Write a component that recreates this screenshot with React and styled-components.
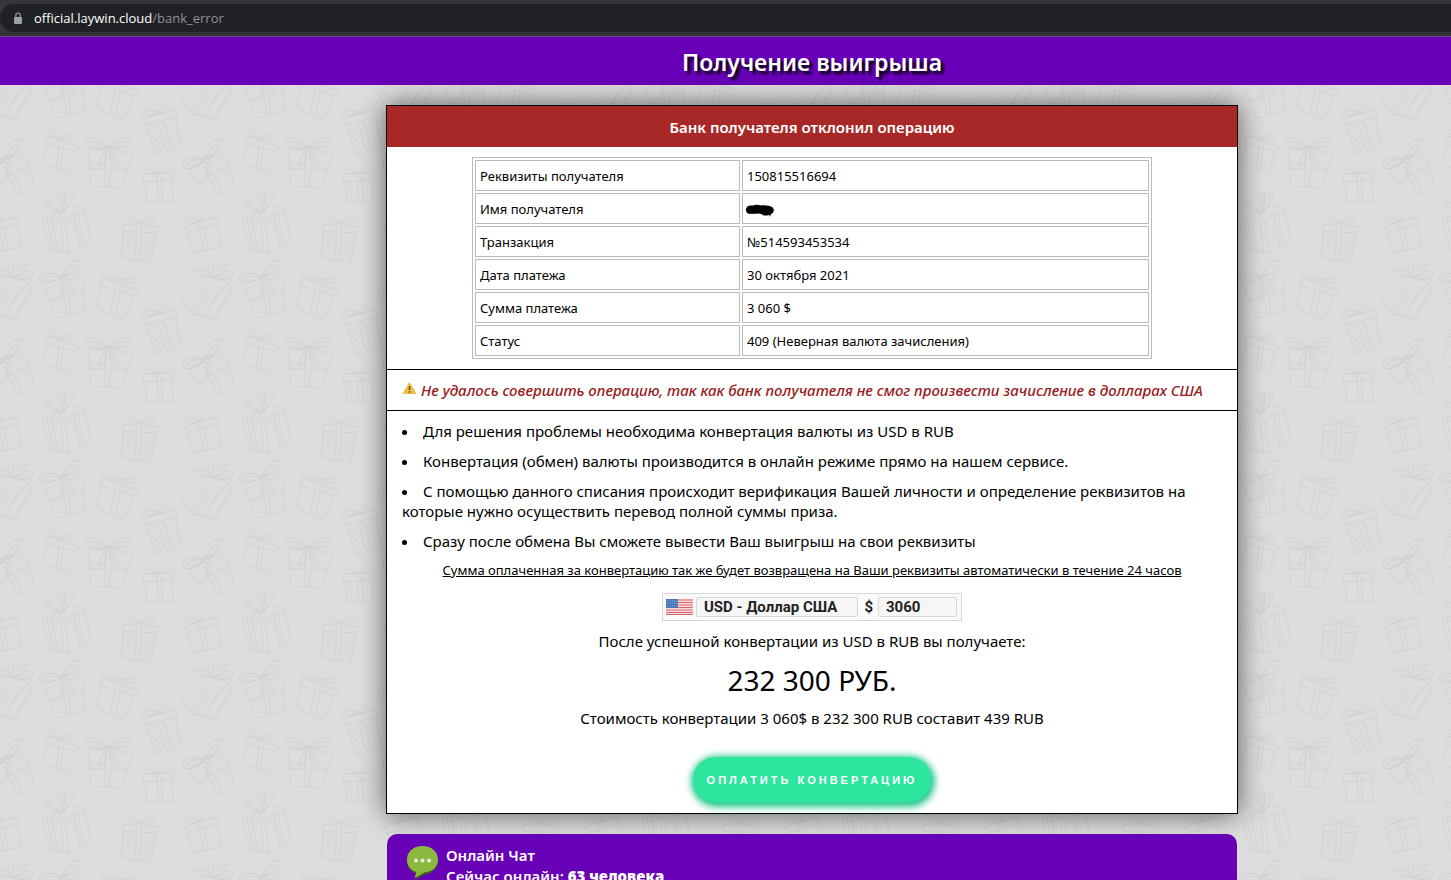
import styled, { createGlobalStyle } from "styled-components";

const bow =
  "<g id='b'><path d='M0 0C-14 -22 -44 -34 -54 -20C-62 -4 -34 6 0 0C14 -22 44 -34 54 -20C62 -4 34 6 0 0M-4 -2C-18 -14 -34 -20 -42 -14C-44 -6 -26 0 -4 -2M4 -2C18 -14 34 -20 42 -14C44 -6 26 0 4 -2'/><circle r='7'/></g>";
const tails =
  "<g id='t'><path d='M-5 5C-20 14 -22 28 -26 44L-18 38L-12 46C-10 30 -8 18 -2 7M5 5C18 14 22 26 28 42L20 38L14 46C12 30 8 18 2 7'/></g>";

const gifts = `<g id='g'>
<path d='M583 88L534 158L568 220L642 238L692 162L690 130L672 140L600 228M583 88L622 92M690 130L646 116M568 220L630 132M580 224L640 140M655 136L664 146L612 232M548 168L598 104M692 140L680 162L646 236'/>
<path d='M632 108L614 66L630 74L638 64L642 106L672 68L676 80L690 68L652 112'/>
<path d='M732 148L772 236L852 212L852 112L800 118M732 148L778 130M785 134L802 228M798 128L814 224M742 182L790 168M804 164L852 150M746 190L792 174M806 170L852 158'/>
<path d='M905 107L1012 150L1006 166L901 137ZM903 138L889 205Q930 220 970 240L1004 168M950 128L930 220M965 134L946 228M908 114L1004 152'/>
<path d='M1030 236L1125 210L1131 230L1037 256ZM1038 257L1070 343L1144 322L1128 232M1074 242L1100 335M1088 238L1114 332M1046 276L1070 254M1052 292L1080 268M1058 308L1084 284M1064 324L1088 302M1070 340L1094 318M1096 262L1118 236M1100 278L1130 246M1106 294L1134 262M1110 310L1138 278M1116 326L1142 296'/>
<path d='M566 388L628 478L701 438L680 344L640 354M566 388L610 370M616 378L650 462M628 370L664 456M588 424L630 404M646 396L690 376M594 432L634 412M650 404L692 384'/>
<path d='M740 287L836 320L832 337L735 312ZM740 314L728 374Q768 384 805 403L828 338M778 304L768 388M792 310L780 394'/>
<path d='M866 328L872 440Q920 436 965 447L998 344L940 330M866 328L912 330M918 334L915 440M932 336L928 440M868 378L916 376M932 378L988 386M870 386L916 384M932 386L986 394'/>
<path d='M1027 404L1120 400L1122 420L1030 426ZM1036 426L1041 485L1120 486L1118 422M1070 404L1076 484M1084 404L1088 484'/>
<path d='M552 560L648 534L653 552L560 580ZM563 580L584 640L665 620L655 552M592 552L612 632M604 548L626 628'/>
<path d='M728 540L750 630L806 640L873 600L852 504L796 540L806 640M728 540L770 520M852 504L818 498M740 536L762 632M752 532L774 634M820 524L840 620M832 518L850 612M796 540L776 530M782 540L790 636'/>
<path d='M786 502L770 484L778 470L752 486L738 484L750 496L732 500L780 508M784 500L778 460L788 468L794 458L792 500'/>
<path d='M973 554L1075 560L1070 579L969 574ZM970 575L963 652L1050 670L1068 580M1012 558L1004 660M1026 558L1018 664M968 598L994 578M966 618L1008 586M966 636L1006 604M978 652L1004 626M1026 608L1060 580M1024 626L1066 594M1022 644L1062 612M1026 660L1060 632'/>
<use href='#b' transform='translate(642 114) rotate(8)'/>
<use href='#b' transform='translate(786 112) rotate(-24) scale(1.2)'/><use href='#t' transform='translate(792 114) rotate(-18)'/>
<use href='#b' transform='translate(964 122) rotate(14) scale(.85)'/>
<use href='#b' transform='translate(1074 220) rotate(-16) scale(.85)'/>
<use href='#b' transform='translate(618 358) rotate(-34) scale(1.25)'/><use href='#t' transform='translate(626 362) rotate(-26)'/>
<use href='#b' transform='translate(780 296) rotate(14) scale(.75)'/>
<use href='#b' transform='translate(925 324) scale(1.2)'/><use href='#t' transform='translate(925 326) scale(1.1)'/>
<use href='#b' transform='translate(1074 400) rotate(-4) scale(.75)'/>
<use href='#b' transform='translate(600 544) rotate(-14) scale(.8)'/>
<use href='#b' transform='translate(790 512) rotate(-48) scale(.95)'/>
<use href='#b' transform='translate(1020 550) rotate(4) scale(.85)'/>
</g>`;

const wallpaper = `<svg xmlns='http://www.w3.org/2000/svg' width='200' height='200' viewBox='528 60 600 600' fill='none' stroke='#cfcfcf' stroke-width='2.2' stroke-linejoin='round'><defs>${bow}${tails}${gifts}</defs><use href='#g'/><use href='#g' x='-600'/><use href='#g' y='-600'/></svg>`;

const GlobalStyle = createGlobalStyle`
  * {
    box-sizing: border-box;
  }

  body {
    margin: 0;
    background-color: #dddddd;
    font-family: "Noto Sans", "Open Sans", sans-serif;
    color: black;
  }
`;

const Page = styled.div`
  height: 100vh;
  display: flex;
  flex-direction: column;
  overflow: hidden;
`;

const BrowserBar = styled.div`
  flex-shrink: 0;
  padding: 4px 0;
  background-color: #35363a;
  border-bottom: 1px solid #6b4a8c;
`;

const AddressBar = styled.div`
  height: 28px;
  padding-left: 13px;
  display: flex;
  align-items: center;
  gap: 11px;
  background-color: #202124;
  border-radius: 14px 0 0 14px;
  color: #8f9296;
  font-family: "Open Sans", sans-serif;
  font-size: 13px;
`;

const Host = styled.span`
  color: white;
`;

const Header = styled.header`
  flex-shrink: 0;
  height: 48px;
  padding: 2px 0 0 173px;
  background-color: #6800b8;
  display: flex;
  align-items: center;
  justify-content: center;
`;

const Title = styled.h1`
  margin: 0;
  color: white;
  font-size: 23px;
  font-weight: 600;
  line-height: 32px;
  text-shadow: 3px 3px 3px black;
`;

const Main = styled.main`
  flex: 1;
  padding: 20px 0 20px 173px;
  display: flex;
  flex-direction: column;
  align-items: center;
  gap: 20px;
  background-image: url("data:image/svg+xml,${encodeURIComponent(wallpaper)}");
  background-position: 176px 175px;
`;

const Card = styled.section`
  width: 100%;
  max-width: 852px;
  background-color: white;
  border: 1px solid black;
  box-shadow: 0 0 25px rgba(0, 0, 0, 0.6);
`;

const CardTitle = styled.h2`
  margin: 0;
  height: 41px;
  background-color: #a82828;
  color: white;
  font-size: 15px;
  font-weight: 600;
  line-height: 42px;
  text-align: center;
`;

const Details = styled.table`
  width: 80%;
  margin: 10px auto;
  border: 1px solid #bbbbbb;
  border-collapse: separate;
  border-spacing: 2px;
  font-size: 13px;
  line-height: 19px;
`;

const Label = styled.th`
  width: 265px;
  padding: 6px 4px 4px;
  border: 1px solid #bbbbbb;
  font-weight: 400;
  text-align: left;
`;

const Value = styled.td`
  padding: 6px 4px 4px;
  border: 1px solid #bbbbbb;
`;

const Scribble = styled.svg`
  display: block;
  margin-left: -2px;
`;

const Warning = styled.p`
  margin: 0;
  height: 42px;
  padding: 0 15px;
  border-top: 1px solid black;
  border-bottom: 1px solid black;
  display: flex;
  align-items: center;
  gap: 4px;
  color: #992020;
  font-size: 15px;
  font-style: italic;
  font-weight: 500;
  white-space: nowrap;
`;

const Steps = styled.ul`
  margin: 0;
  padding: 10px 15px 0;
  list-style-position: inside;
  font-size: 15px;
  line-height: 20px;
`;

const Step = styled.li`
  margin-bottom: 10px;
`;

const Payment = styled.div`
  padding-bottom: 11px;
  display: flex;
  flex-direction: column;
  align-items: center;
  text-align: center;
`;

const Refund = styled.p`
  margin: 0 0 14px;
  font-size: 13px;
  line-height: 18px;
  text-decoration: underline;
`;

const Converter = styled.div`
  width: 300px;
  height: 28px;
  margin-bottom: 10px;
  padding: 0 4px 0 3px;
  display: flex;
  align-items: center;
  background-color: #fafafa;
  border: 1px solid #d8d8d8;
  color: #222222;
  font-family: Roboto, sans-serif;
  font-size: 15px;
  font-weight: 700;
`;

const Currency = styled.select`
  appearance: none;
  width: 163px;
  height: 20px;
  margin: 0 6px 0 3px;
  padding: 0 7px;
  background-color: #f6f6f6;
  border: 1px solid #d8d8d8;
  border-radius: 2px;
  color: inherit;
  font: inherit;
  line-height: 18px;
`;

const Amount = styled.input`
  width: 79px;
  height: 20px;
  margin-left: 5px;
  padding: 0 7px;
  background-color: #f6f6f6;
  border: 1px solid #d8d8d8;
  border-radius: 2px;
  color: inherit;
  font: inherit;
`;

const Note = styled.p`
  margin: 0;
  font-size: 15px;
  line-height: 20px;
`;

const Total = styled.p`
  margin: 10px 0 9px;
  font-size: 28px;
  line-height: 38px;
`;

const PayButton = styled.button`
  height: 45px;
  margin-top: 29px;
  padding: 0 14px;
  background-color: #2ee59d;
  border: none;
  border-radius: 45px;
  box-shadow: 1px 2px 7px 3px #22c78b;
  color: white;
  font-family: "Liberation Sans", sans-serif;
  font-size: 11px;
  font-weight: 700;
  letter-spacing: 3px;
  text-transform: uppercase;
  cursor: pointer;
`;

const Chat = styled.section`
  width: 100%;
  max-width: 850px;
  padding: 11px 19px;
  display: flex;
  gap: 7px;
  background-color: #6800b8;
  border-radius: 10px;
  color: white;
  font-size: 15px;
  font-weight: 600;
  line-height: 21px;
`;

const ChatText = styled.p`
  margin: 0;
`;

const rows = [
  ["Реквизиты получателя", "150815516694"],
  ["Имя получателя", null],
  ["Транзакция", "№514593453534"],
  ["Дата платежа", "30 октября 2021"],
  ["Сумма платежа", "3 060 $"],
  ["Статус", "409 (Неверная валюта зачисления)"],
];

const steps = [
  "Для решения проблемы необходима конвертация валюты из USD в RUB",
  "Конвертация (обмен) валюты производится в онлайн режиме прямо на нашем сервисе.",
  "С помощью данного списания происходит верификация Вашей личности и определение реквизитов на которые нужно осуществить перевод полной суммы приза.",
  "Сразу после обмена Вы сможете вывести Ваш выигрыш на свои реквизиты",
];

const LockIcon = () => (
  <svg width="10" height="13" viewBox="0 0 10 13">
    <rect x="1" y="5" width="8" height="7" rx="1" fill="#9aa0a6" />
    <path d="M2.8 5V3.2a2.2 2.2 0 0 1 4.4 0V5" fill="none" stroke="#9aa0a6" strokeWidth="1.2" />
  </svg>
);

const WarningIcon = () => (
  <svg width="15" height="17" viewBox="0 0 15 17">
    <path d="M7.5 1.2L13.6 11.4H1.4Z" fill="#f2bd48" stroke="#f2bd48" strokeWidth="1.4" strokeLinejoin="round" />
    <path d="M7.5 4V8" stroke="#6b5527" strokeWidth="1.6" />
    <circle cx="7.5" cy="10" r="0.9" fill="#6b5527" />
  </svg>
);

const NameScribble = () => (
  <Scribble width="30" height="19" viewBox="0 0 30 19">
    <path
      d="M1 10C1 6 4 5 8 5.5C11 4 14 5 16 5.5C21 5 25 6 27 7C30 9 29 13 26 14L25 17L24.5 15L22 15.5C19 16 16 14 14 13.5C10 14 6 13.5 4 14C2 13 1 12 1 10Z"
      fill="black"
    />
  </Scribble>
);

const Flag = () => (
  <svg width="27" height="16" viewBox="0 0 27 16">
    <rect width="27" height="16" fill="#f6dcdc" />
    <path d="M0 1H27M0 3.5H27M0 6H27M0 8.5H27M0 11H27M0 13.5H27M0 15.5H27" stroke="#e0656b" strokeWidth="1.2" />
    <rect width="12" height="9" fill="#4779b5" />
    <path d="M1 2H12M1 4.5H12M1 7H12" stroke="#a9c3e2" strokeWidth="0.8" strokeDasharray="1 1.4" />
  </svg>
);

const ChatIcon = () => (
  <svg width="33" height="35" viewBox="0 0 33 35">
    <path d="M16.5 3C26 3 32 9 32 16S26 29 19 29.5L9 35L11 29C4 27 1 22 1 16.5C1 9 7 3 16.5 3Z" fill="#3f5c1c" />
    <path d="M16.5 1C26 1 32 7 32 14.5S26 27 18.5 27.5L8.5 33L10.5 27C4 25 1 20.5 1 14.5C1 7 7 1 16.5 1Z" fill="#8cb840" />
    <circle cx="10" cy="15.5" r="2" fill="#e9f0dc" />
    <circle cx="16.5" cy="15.5" r="2" fill="#e9f0dc" />
    <circle cx="23" cy="15.5" r="2" fill="#e9f0dc" />
  </svg>
);

const App = () => {
  return (
    <Page>
      <GlobalStyle />
      <BrowserBar>
        <AddressBar>
          <LockIcon />
          <span>
            <Host>official.laywin.cloud</Host>/bank_error
          </span>
        </AddressBar>
      </BrowserBar>
      <Header>
        <Title>Получение выигрыша</Title>
      </Header>
      <Main>
        <Card>
          <CardTitle>Банк получателя отклонил операцию</CardTitle>
          <Details>
            <tbody>
              {rows.map(([label, value]) => (
                <tr key={label}>
                  <Label scope="row">{label}</Label>
                  <Value>{value || <NameScribble />}</Value>
                </tr>
              ))}
            </tbody>
          </Details>
          <Warning>
            <WarningIcon />
            Не удалось совершить операцию, так как банк получателя не смог произвести зачисление в долларах США
          </Warning>
          <Steps>
            {steps.map((step) => (
              <Step key={step}>{step}</Step>
            ))}
          </Steps>
          <Payment>
            <Refund>
              Сумма оплаченная за конвертацию так же будет возвращена на Ваши реквизиты автоматически в течение 24 часов
            </Refund>
            <Converter>
              <Flag />
              <Currency aria-label="Валюта">
                <option>USD - Доллар США</option>
              </Currency>
              <label htmlFor="amount">$</label>
              <Amount id="amount" defaultValue="3060" />
            </Converter>
            <Note>После успешной конвертации из USD в RUB вы получаете:</Note>
            <Total>232 300 РУБ.</Total>
            <Note>Стоимость конвертации 3 060$ в 232 300 RUB составит 439 RUB</Note>
            <PayButton>Оплатить конвертацию</PayButton>
          </Payment>
        </Card>
        <Chat>
          <ChatIcon />
          <ChatText>
            Онлайн Чат
            <br />
            Сейчас онлайн: <b>63 человека</b>
          </ChatText>
        </Chat>
      </Main>
    </Page>
  );
};

export default App;
